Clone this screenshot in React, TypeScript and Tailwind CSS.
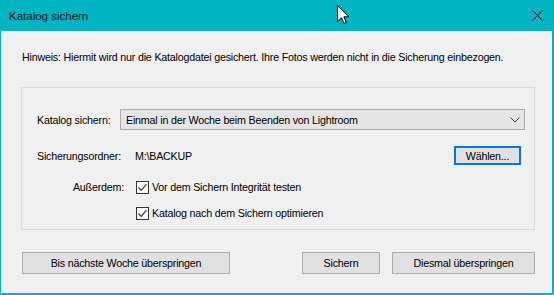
const Check = () => (
  <span className="w-[13px] h-[13px] border border-[#333333] bg-white flex items-center justify-center shrink-0">
    <svg width="11" height="11" viewBox="0 0 11 11">
      <path d="M1.5 5.5 L4.2 8.3 L9.5 2.2" fill="none" stroke="#333333" strokeWidth="1.2" />
    </svg>
  </span>
);

const Button = ({ label, className }: { label: string; className: string }) => (
  <button className={`h-[22px] bg-[#e1e1e1] border border-[#adadad] text-black ${className}`}>
    {label}
  </button>
);

export default function App() {
  return (
    <div className="relative w-[554px] h-[295px] flex flex-col bg-[#00b4c2] font-['Liberation_Sans',Arial,sans-serif] text-[10.7px] tracking-[-0.2px] text-black leading-[16px] whitespace-nowrap overflow-hidden">
      {/* title bar */}
      <div className="h-[31px] flex items-center justify-between pl-[9px] pr-[11px]">
        <span className="text-[11.5px] tracking-normal text-[#111]">Katalog sichern</span>
        <svg width="11" height="11" viewBox="0 0 11 11">
          <path d="M0.5 0.5 L10.5 10.5 M10.5 0.5 L0.5 10.5" stroke="#000" strokeWidth="1" />
        </svg>
      </div>

      {/* mouse pointer */}
      <svg className="absolute left-[337px] top-[5px]" width="13" height="20" viewBox="0 0 13 20">
        <path
          d="M0.5 0.5 L0.5 16.5 L4.5 12.8 L7 18.5 L9.3 17.5 L6.9 11.8 L12 11.8 Z"
          fill="#fff"
          stroke="#000"
          strokeWidth="1"
          strokeLinejoin="miter"
        />
      </svg>

      {/* body */}
      <div className="flex-1 bg-[#f0f0f0] ml-[1px] mr-[2px] mb-[2px] pl-[20px] pr-[17px] pt-[18px]">
        <p className="pl-[1px]">
          Hinweis: Hiermit wird nur die Katalogdatei gesichert. Ihre Fotos werden nicht in die Sicherung einbezogen.
        </p>

        <div className="mt-[22px] h-[143px] border border-[#dcdcdc] pt-[21px] pl-[15px]">
          <div className="flex items-center h-[21px] pr-[9px]">
            <span className="w-[83px]">Katalog sichern:</span>
            <div className="flex-1 h-[21px] bg-[#e5e5e5] border border-[#acacac] flex items-center justify-between pl-[5px] pr-[4px]">
              <span>Einmal in der Woche beim Beenden von Lightroom</span>
              <svg width="10" height="6" viewBox="0 0 10 6">
                <path d="M0.5 0.5 L5 5 L9.5 0.5" fill="none" stroke="#444" strokeWidth="1" />
              </svg>
            </div>
          </div>

          <div className="flex items-center h-[19px] mt-[16px] pr-[13px]">
            <span className="w-[98px]">Sicherungsordner:</span>
            <span className="flex-1">M:\BACKUP</span>
            <button className="w-[67px] h-[19px] bg-[#e1e1e1] border-2 border-[#0078d7] flex items-center justify-center">
              Wählen...
            </button>
          </div>

          <div className="flex items-center h-[16px] mt-[14px]">
            <span className="w-[87px] text-right">Außerdem:</span>
            <span className="ml-[12px]">
              <Check />
            </span>
            <span className="ml-[3px]">Vor dem Sichern Integrität testen</span>
          </div>

          <div className="flex items-center h-[16px] mt-[10px] pl-[99px]">
            <Check />
            <span className="ml-[3px]">Katalog nach dem Sichern optimieren</span>
          </div>
        </div>

        <div className="flex items-center mt-[22px] pl-[1px]">
          <Button label="Bis nächste Woche überspringen" className="w-[208px]" />
          <Button label="Sichern" className="w-[78px] ml-auto" />
          <Button label="Diesmal überspringen" className="w-[143px] ml-[12px]" />
        </div>
      </div>
    </div>
  );
}
